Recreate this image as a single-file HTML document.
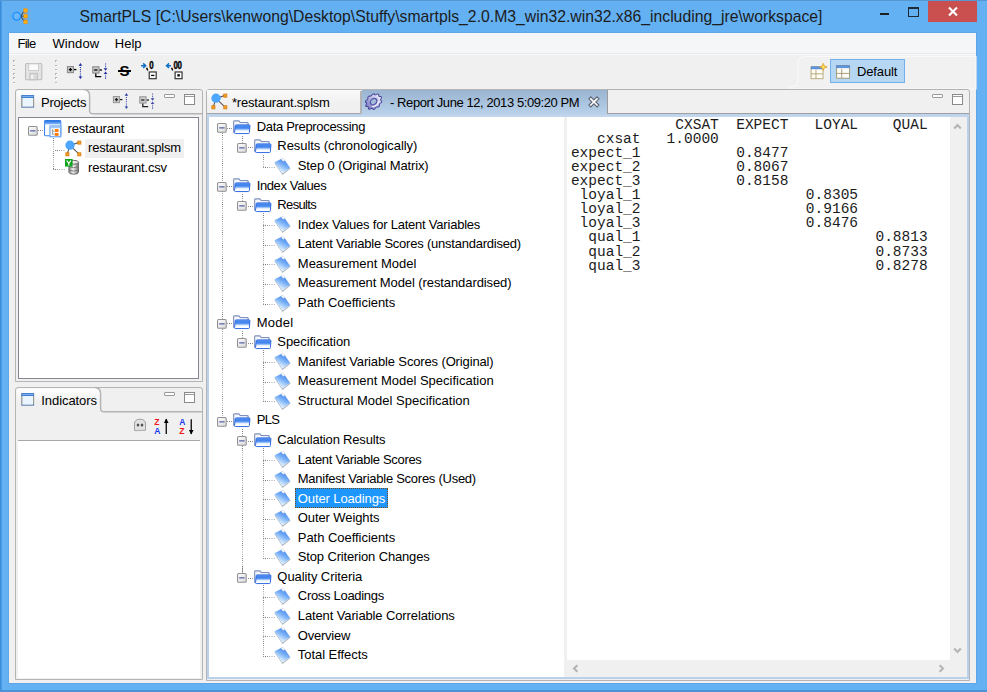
<!DOCTYPE html>
<html><head><meta charset="utf-8"><title>SmartPLS</title>
<style>
html,body{margin:0;padding:0}
body{width:987px;height:692px;overflow:hidden;background:#63B0F3;position:relative;font-family:"Liberation Sans",sans-serif;font-size:13px;color:#000;letter-spacing:-0.2px}
.a{position:absolute}
.t{position:absolute;white-space:pre;line-height:16px;height:16px}
svg{position:absolute;overflow:visible}
.dotv{position:absolute;width:1px;background-image:linear-gradient(to bottom,#727272 50%,transparent 50%);background-size:1px 2.17px}
.doth{position:absolute;height:1px;background-image:linear-gradient(to right,#727272 50%,transparent 50%);background-size:2.17px 1px}
pre{margin:0}
</style></head>
<body>
<svg width="0" height="0" style="left:0;top:0"><defs><linearGradient id="tg88" x1="0" y1="0" x2="0" y2="1"><stop offset="0" stop-color="#fff"/><stop offset=".55" stop-color="#f0f0f0"/></linearGradient><linearGradient id="eg" x1="0" y1="0" x2="1" y2="1"><stop offset="0" stop-color="#fff"/><stop offset="1" stop-color="#d8d8d8"/></linearGradient><linearGradient id="pg" x1="0" y1="0" x2="0" y2="1"><stop offset="0" stop-color="#1c6be0"/><stop offset="1" stop-color="#8ec0ff"/></linearGradient><linearGradient id="cg" x1="0" y1="0" x2="1" y2="0"><stop offset="0" stop-color="#8a8a8a"/><stop offset=".45" stop-color="#f2f2f2"/><stop offset="1" stop-color="#777"/></linearGradient><linearGradient id="tg386" x1="0" y1="0" x2="0" y2="1"><stop offset="0" stop-color="#fff"/><stop offset=".55" stop-color="#f0f0f0"/></linearGradient><linearGradient id="gg" x1="0" y1="0" x2="1" y2="0"><stop offset="0" stop-color="#7a7ac0"/><stop offset=".5" stop-color="#b8b8e2"/><stop offset="1" stop-color="#eeeefa"/></linearGradient><linearGradient id="fg" x1="0" y1="0" x2="0" y2="1"><stop offset="0" stop-color="#6ea8f7"/><stop offset=".25" stop-color="#3b7cea"/><stop offset=".48" stop-color="#65a1f6"/><stop offset=".6" stop-color="#dde9fc"/><stop offset=".82" stop-color="#ffffff"/></linearGradient><linearGradient id="lg" x1=".8" y1=".1" x2=".3" y2=".95"><stop offset="0" stop-color="#4284ea"/><stop offset=".4" stop-color="#76aef7"/><stop offset=".8" stop-color="#cfe7fd"/><stop offset="1" stop-color="#f2faff"/></linearGradient></defs></svg>
<div class="a" style="left:0px;top:0px;width:987px;height:692px;background:#63B0F3"></div>
<div class="a" style="left:0px;top:0px;width:3px;height:692px;background:linear-gradient(to right,#348ad8 0,#3f8fdb 1px,#63B0F3 2.4px)"></div>
<div class="a" style="left:0px;top:0px;width:987px;height:1px;background:#5696d3"></div>
<div class="a" style="left:0px;top:690px;width:987px;height:2px;background:#4d94d6"></div>
<div class="a" style="left:8px;top:32px;width:969px;height:652px;background:#5ea6e8"></div>
<svg style="left:12px;top:7.6px" width="17.4" height="17.4" viewBox="0 0 16 16">
<path d="M8 7.5 L11 3 M8 7.5 L11 7.5 M8 7.5 L11 12" stroke="#3a3a3a" stroke-width=".9" fill="none"/>
<path d="M12.4 3 V12.4" stroke="#9aa0a8" stroke-width="1.6"/>
<circle cx="4.3" cy="7.6" r="3.5" fill="#6db6f8" stroke="#1e90ff" stroke-width="1.2"/>
<rect x="10.9" y=".7" width="3.1" height="3.1" fill="#ffb400" stroke="#e89020" stroke-width=".7"/>
<rect x="10.9" y="6" width="3.1" height="3.1" fill="#ffb400" stroke="#e89020" stroke-width=".7"/>
<rect x="10.9" y="11.2" width="3.1" height="3.1" fill="#ffb400" stroke="#e89020" stroke-width=".7"/>
</svg>
<div class="t" style="left:51px;width:800px;text-align:center;top:7px;height:20px;line-height:20px;font-size:15.75px;letter-spacing:0;color:#1c1c1c">SmartPLS [C:\Users\kenwong\Desktop\Stuffy\smartpls_2.0.M3_win32.win32.x86_including_jre\workspace]</div>
<div class="a" style="left:880px;top:13px;width:8.9px;height:2.4px;background:#1e1e1e"></div>
<div class="a" style="left:908px;top:7px;width:11px;height:9.5px;box-sizing:border-box;border:1.2px solid #1e2a38;border-top-width:2.6px"></div>
<div class="a" style="left:928px;top:1px;width:49px;height:20.9px;background:#c9504f"></div>
<svg style="left:947.5px;top:7.3px" width="10" height="9" viewBox="0 0 10 9"><path d="M1 0.5 L9 8.5 M9 0.5 L1 8.5" stroke="#fff" stroke-width="2.1" fill="none"/></svg>
<div class="a" style="left:9px;top:33px;width:967px;height:650px;background:#f0f0f0"></div>
<div class="a" style="left:9px;top:33px;width:967px;height:20px;background:#f5f6f7"></div>
<div class="a" style="left:9px;top:53px;width:967px;height:1px;background:#e8e9ea"></div>
<div class="a" style="left:9px;top:54px;width:967px;height:1px;background:#fafafa"></div>
<div class="t" style="left:17.4px;top:35.75px;font-size:13px;letter-spacing:-0.70px;">File</div>
<div class="t" style="left:52.4px;top:35.75px;font-size:13px;letter-spacing:0.11px;">Window</div>
<div class="t" style="left:114.8px;top:35.75px;font-size:13px;letter-spacing:-0.02px;">Help</div>
<div class="a" style="left:13.2px;top:60.2px;width:1.6px;height:1.6px;background:#b4b4b4"></div>
<div class="a" style="left:14.2px;top:61.2px;width:1.2px;height:1.2px;background:#fff"></div>
<div class="a" style="left:13.2px;top:64.5px;width:1.6px;height:1.6px;background:#b4b4b4"></div>
<div class="a" style="left:14.2px;top:65.5px;width:1.2px;height:1.2px;background:#fff"></div>
<div class="a" style="left:13.2px;top:68.8px;width:1.6px;height:1.6px;background:#b4b4b4"></div>
<div class="a" style="left:14.2px;top:69.8px;width:1.2px;height:1.2px;background:#fff"></div>
<div class="a" style="left:13.2px;top:73.1px;width:1.6px;height:1.6px;background:#b4b4b4"></div>
<div class="a" style="left:14.2px;top:74.1px;width:1.2px;height:1.2px;background:#fff"></div>
<div class="a" style="left:13.2px;top:77.4px;width:1.6px;height:1.6px;background:#b4b4b4"></div>
<div class="a" style="left:14.2px;top:78.4px;width:1.2px;height:1.2px;background:#fff"></div>
<div class="a" style="left:13.2px;top:81.7px;width:1.6px;height:1.6px;background:#b4b4b4"></div>
<div class="a" style="left:14.2px;top:82.7px;width:1.2px;height:1.2px;background:#fff"></div>
<div class="a" style="left:55px;top:60.2px;width:1.6px;height:1.6px;background:#b4b4b4"></div>
<div class="a" style="left:56px;top:61.2px;width:1.2px;height:1.2px;background:#fff"></div>
<div class="a" style="left:55px;top:64.5px;width:1.6px;height:1.6px;background:#b4b4b4"></div>
<div class="a" style="left:56px;top:65.5px;width:1.2px;height:1.2px;background:#fff"></div>
<div class="a" style="left:55px;top:68.8px;width:1.6px;height:1.6px;background:#b4b4b4"></div>
<div class="a" style="left:56px;top:69.8px;width:1.2px;height:1.2px;background:#fff"></div>
<div class="a" style="left:55px;top:73.1px;width:1.6px;height:1.6px;background:#b4b4b4"></div>
<div class="a" style="left:56px;top:74.1px;width:1.2px;height:1.2px;background:#fff"></div>
<div class="a" style="left:55px;top:77.4px;width:1.6px;height:1.6px;background:#b4b4b4"></div>
<div class="a" style="left:56px;top:78.4px;width:1.2px;height:1.2px;background:#fff"></div>
<div class="a" style="left:55px;top:81.7px;width:1.6px;height:1.6px;background:#b4b4b4"></div>
<div class="a" style="left:56px;top:82.7px;width:1.2px;height:1.2px;background:#fff"></div>
<svg style="left:25.3px;top:63.2px;" width="17.35" height="17.35" viewBox="0 0 16 16"><rect x=".5" y=".5" width="15" height="15" rx="1" fill="#e4e4e4" stroke="#bcbcbc"/>
<rect x="3.5" y=".8" width="9" height="6.2" fill="#fafafa" stroke="#c8c8c8" stroke-width=".8"/>
<rect x="4.5" y="9.5" width="7" height="6" fill="#d8d8d8" stroke="#bdbdbd" stroke-width=".8"/>
<rect x="5.5" y="11" width="2.2" height="3.5" fill="#f4f4f4"/></svg>
<svg style="left:66.3px;top:62.2px;" width="17.35" height="17.35" viewBox="0 0 16 16"><g opacity="1"><rect x="1.3" y="4.2" width="5.6" height="5.6" fill="#c8c8c8" stroke="#8c8c8c"/>
<path d="M2.6 7 H5.6 M4.1 5.5 V8.5" stroke="#000" stroke-width="1.2"/><rect x="7.4" y="6.4" width="2.2" height="1.2" fill="#000"/>
<path d="M13.3 2.5 V14" stroke="#2030a0" stroke-width="1" stroke-dasharray="1 1"/>
<path d="M11.6 3.4 L13.3 1 L15 3.4 Z M11.6 13.3 L13.3 15.7 L15 13.3 Z" fill="#2030a0"/></g></svg>
<svg style="left:91.5px;top:62.2px;" width="17.35" height="17.35" viewBox="0 0 16 16"><g opacity="1" transform="translate(0 .9)"><rect x=".7" y="3.5" width="5.8" height="5.8" fill="#c8c8c8" stroke="#8c8c8c"/>
<rect x="2" y="5.9" width="3" height="1.2" fill="#000"/><rect x="7" y="5.9" width="2.2" height="1.2" fill="#000"/>
<path d="M3.5 9.8 V12.6 H8.5" stroke="#000" stroke-width="1.2" fill="none"/>
<path d="M12.5 .5 V5 M12.5 9.5 V14.6" stroke="#2030a0" stroke-width="1" stroke-dasharray="1 1"/>
<path d="M10.8 4.8 L12.5 7.2 L14.2 4.8 Z M10.8 10.2 L12.5 7.8 L14.2 10.2 Z" fill="#2030a0"/></g></svg>
<div class="t" style="left:119.6px;top:62.4px;font-size:15px;font-weight:bold;line-height:18px;height:18px;letter-spacing:0">S</div>
<div class="a" style="left:118px;top:70.2px;width:13px;height:1.4px;background:#000"></div>
<svg style="left:141px;top:61.6px;" width="17.35" height="17.35" viewBox="0 0 16 16"><path d="M0 3.4 H3.4 M2 1.3 L4.3 3.4 L2 5.5" stroke="#1070c8" stroke-width="1.4" fill="none"/><path d="M5.2 5.4 L6.2 7.8" stroke="#000" stroke-width="1.3"/><text transform="translate(7.6 6.9) scale(.78 1)" font-family="Liberation Sans,sans-serif" font-size="9.4" font-weight="bold" fill="#000" stroke="#000" stroke-width=".35">0</text><rect x="7.6" y="9.2" width="6.4" height="6.2" fill="#fff" stroke="#333" stroke-width="1.1"/><rect x="9.299999999999999" y="11.8" width="3" height="1.2" fill="#000"/></svg>
<svg style="left:166px;top:61.6px;" width="19.51875" height="17.35" viewBox="0 0 18 16"><path d="M1.2 3.4 H4.6 M2.8 1.3 L.5 3.4 L2.8 5.5" stroke="#1070c8" stroke-width="1.4" fill="none"/><path d="M5.2 5.4 L6.2 7.8" stroke="#000" stroke-width="1.3"/><text transform="translate(6.9 6.9) scale(.78 1)" font-family="Liberation Sans,sans-serif" font-size="9.4" font-weight="bold" fill="#000" stroke="#000" stroke-width=".35">0</text><text transform="translate(10.6 6.9) scale(.78 1)" font-family="Liberation Sans,sans-serif" font-size="9.4" font-weight="bold" fill="#000" stroke="#000" stroke-width=".35">0</text><rect x="8.4" y="9.2" width="6.4" height="6.2" fill="#fff" stroke="#333" stroke-width="1.1"/><rect x="10.5" y="11.2" width="2.2" height="2.2" fill="#000"/></svg>
<svg style="left:790px;top:53px" width="186" height="36" viewBox="0 0 186 36"><path d="M0 33.5 H3 Q8 33.5 8 27 V10 Q8 3.5 15 3.5 H186 V36 H0 Z" fill="#f1f1f1" stroke="#f9f9f9" stroke-width="1.2"/></svg>
<svg style="left:809.5px;top:62.5px;" width="17.35" height="17.35" viewBox="0 0 16 16"><rect x="1" y="3.5" width="11" height="11" fill="#fdfdf5" stroke="#b0a070" stroke-width=".8"/>
<rect x="1" y="3.5" width="11" height="2" fill="#5a94e0" stroke="#4a7cd0" stroke-width=".4"/>
<path d="M5.5 6 V14.5 M1 10 H12" stroke="#b0a070" stroke-width=".8"/>
<path d="M12.2 .3 L13.2 2.8 L15.8 3.6 L13.2 4.5 L12.2 7 L11.2 4.5 L8.8 3.6 L11.2 2.8 Z" fill="#ffe066" stroke="#d8a020" stroke-width=".7"/></svg>
<div class="a" style="left:830px;top:59px;width:74.8px;height:24px;box-sizing:border-box;background:#b6d7f4;border:1px solid #74b0ea"></div>
<svg style="left:835px;top:62.8px;" width="17.35" height="17.35" viewBox="0 0 16 16"><rect x="1.5" y="2.5" width="12" height="11.5" fill="#fdfdf8" stroke="#a09068" stroke-width=".8"/>
<rect x="1.5" y="2.5" width="12" height="2" fill="#5a94e0" stroke="#4a7cd0" stroke-width=".4"/>
<path d="M6.2 5.3 V14 M1.5 9.6 H13.5" stroke="#a09068" stroke-width=".8"/></svg>
<div class="t" style="left:857px;top:63.75px;font-size:13px;letter-spacing:-0.13px;">Default</div>
<div class="a" style="left:15px;top:88.7px;width:188px;height:293.5px;box-sizing:border-box;border:1.4px solid #b4b4b4;border-radius:3px 3px 0 0;background:#f0f0f0"></div>
<svg style="left:15px;top:88.7px" width="188" height="26.8" viewBox="0 0 188 26.8"><path d="M1.4 24.8 V4 Q1.4 1.4 4 1.4 H69.3 Q74.3 1.4 74.6 7 V24.8 Z" fill="url(#tg88)"/><path d="M69.3 .7 Q74.6 .7 74.6 7 V21.8 Q74.6 24.8 78.3 24.8 H187" fill="none" stroke="#b4b4b4" stroke-width="1.4"/></svg>
<svg style="left:21px;top:95px;" width="13.4" height="13" viewBox="0 0 13 13"><rect x=".6" y=".6" width="11.8" height="11.6" fill="#eaf5ff" stroke="#5a7aa8" stroke-width="1"/>
<rect x=".3" y=".2" width="12.4" height="2.8" fill="#3f7fd6"/><rect x="1" y="1.2" width="11" height=".8" fill="#8fb8ee"/>
<path d="M.6 3 V11" stroke="#c8b070" stroke-width=".6"/><path d="M12.4 3 V11" stroke="#c8b070" stroke-width=".6"/></svg>
<div class="t" style="left:41px;top:94.75px;font-size:13px;letter-spacing:-0.21px;">Projects</div>
<svg style="left:112.4px;top:92.3px;" width="17.35" height="17.35" viewBox="0 0 16 16"><g opacity="0.85"><rect x="1.3" y="4.2" width="5.6" height="5.6" fill="#c8c8c8" stroke="#8c8c8c"/>
<path d="M2.6 7 H5.6 M4.1 5.5 V8.5" stroke="#000" stroke-width="1.2"/><rect x="7.4" y="6.4" width="2.2" height="1.2" fill="#000"/>
<path d="M13.3 2.5 V14" stroke="#2030a0" stroke-width="1" stroke-dasharray="1 1"/>
<path d="M11.6 3.4 L13.3 1 L15 3.4 Z M11.6 13.3 L13.3 15.7 L15 13.3 Z" fill="#2030a0"/></g></svg>
<svg style="left:138.9px;top:92.0px;" width="17.35" height="17.35" viewBox="0 0 16 16"><g opacity="0.85" transform="translate(0 .9)"><rect x=".7" y="3.5" width="5.8" height="5.8" fill="#c8c8c8" stroke="#8c8c8c"/>
<rect x="2" y="5.9" width="3" height="1.2" fill="#000"/><rect x="7" y="5.9" width="2.2" height="1.2" fill="#000"/>
<path d="M3.5 9.8 V12.6 H8.5" stroke="#000" stroke-width="1.2" fill="none"/>
<path d="M12.5 .5 V5 M12.5 9.5 V14.6" stroke="#2030a0" stroke-width="1" stroke-dasharray="1 1"/>
<path d="M10.8 4.8 L12.5 7.2 L14.2 4.8 Z M10.8 10.2 L12.5 7.8 L14.2 10.2 Z" fill="#2030a0"/></g></svg>
<div class="a" style="left:164.2px;top:94px;width:11px;height:4px;box-sizing:border-box;border:1.2px solid #9a9a9a;background:#fff;border-radius:1px"></div>
<div class="a" style="left:184.0px;top:94px;width:11px;height:10.8px;box-sizing:border-box;border:1.2px solid #8a8a8a;background:linear-gradient(#fff 1.1px,#9c9c9c 1.1px,#9c9c9c 2.2px,#fff 2.2px)"></div>
<div class="a" style="left:18px;top:117px;width:181.3px;height:261.9px;box-sizing:border-box;border:1.4px solid #828790;background:#fff"></div>
<svg style="left:27.92px;top:125.52px" width="9.76" height="9.76" viewBox="0 0 9 9"><rect x=".5" y=".5" width="8" height="8" rx="1" fill="url(#eg)" stroke="#919191"/><rect x="2" y="4" width="5" height="1" fill="#40509c"/></svg>
<div class="doth" style="left:38px;top:130px;width:6.5px"></div>
<svg style="left:44.2px;top:120.1px;" width="17.35" height="17.35" viewBox="0 0 16 16"><rect x=".5" y=".5" width="15" height="14" rx="1" fill="#fff" stroke="#3d86e8" stroke-width="1"/>
<rect x=".5" y=".5" width="15" height="3.6" fill="url(#pg)"/>
<rect x="5.5" y="5.5" width="10" height="10" fill="#f4f8ff" stroke="#5c9cf0" stroke-width="1"/>
<rect x="5.5" y="5.5" width="10" height="2" fill="#9cc4f8"/>
<path d="M7.8 8.5 V13.2 H9.5 M7.8 10.2 H9.5" stroke="#888" stroke-width=".7" fill="none"/>
<rect x="10" y="8.4" width="3.4" height="2.6" fill="#ff7a00"/><rect x="10" y="12" width="3.4" height="2.6" fill="#ff7a00"/></svg>
<div class="t" style="left:67.6px;top:120.75px;font-size:13px;">restaurant</div>
<div class="dotv" style="left:53px;top:138px;height:31.5px"></div>
<div class="doth" style="left:55px;top:149.6px;width:10px"></div>
<div class="doth" style="left:53px;top:169.2px;width:12px"></div>
<svg style="left:65.2px;top:139.8px;" width="17.35" height="17.35" viewBox="0 0 16 16"><path d="M4.5 5 L13 2.2 M4.5 5 L13 13 M4.5 5 L2 13.2" stroke="#555" stroke-width="1" fill="none"/>
<circle cx="4.6" cy="4.8" r="4.25" fill="#4da6ff"/>
<rect x="11.8" y="1" width="2.8" height="2.8" fill="#f5a623" stroke="#d87a10" stroke-width=".8"/>
<rect x="11.8" y="11.8" width="2.8" height="2.8" fill="#f5a623" stroke="#d87a10" stroke-width=".8"/>
<rect x=".8" y="11.8" width="2.8" height="2.8" fill="#f5a623" stroke="#d87a10" stroke-width=".8"/></svg>
<div class="a" style="left:85.2px;top:138.8px;width:98.6px;height:19.3px;background:#f0f0f0"></div>
<div class="t" style="left:88px;top:139.75px;font-size:13px;">restaurant.splsm</div>
<svg style="left:64.6px;top:159.2px;" width="17.35" height="17.35" viewBox="0 0 16 16"><path d="M3.6 3 V12.2 A4.4 1.8 0 0 0 12.4 12.2 V3 Z" fill="url(#cg)" stroke="#5a5a5a" stroke-width=".8"/>
<ellipse cx="8" cy="3" rx="4.4" ry="1.8" fill="#e8e8e8" stroke="#5a5a5a" stroke-width=".8"/>
<path d="M3.6 6.2 A4.4 1.8 0 0 0 12.4 6.2 M3.6 9.3 A4.4 1.8 0 0 0 12.4 9.3" fill="none" stroke="#6a6a6a" stroke-width=".7"/>
<rect x="0" y="0" width="7" height="7" fill="#12a51e"/>
<path d="M1.6 1.4 L3.5 4 L5.4 1.4 M3.5 4 V6" stroke="#fff" stroke-width="1.1" fill="none"/></svg>
<div class="t" style="left:88px;top:159.75px;font-size:13px;">restaurant.csv</div>
<div class="a" style="left:15px;top:386.7px;width:188px;height:293.3px;box-sizing:border-box;border:1.4px solid #b4b4b4;border-radius:3px 3px 0 0;background:#f0f0f0"></div>
<svg style="left:15px;top:386.7px" width="188" height="26.8" viewBox="0 0 188 26.8"><path d="M1.4 24.8 V4 Q1.4 1.4 4 1.4 H80.3 Q85.3 1.4 85.6 7 V24.8 Z" fill="url(#tg386)"/><path d="M80.3 .7 Q85.6 .7 85.6 7 V21.8 Q85.6 24.8 89.3 24.8 H187" fill="none" stroke="#b4b4b4" stroke-width="1.4"/></svg>
<svg style="left:21.4px;top:392.8px;" width="13.4" height="13" viewBox="0 0 13 13"><rect x=".6" y=".6" width="11.8" height="11.6" fill="#eaf5ff" stroke="#5a7aa8" stroke-width="1"/>
<rect x=".3" y=".2" width="12.4" height="2.8" fill="#3f7fd6"/><rect x="1" y="1.2" width="11" height=".8" fill="#8fb8ee"/>
<path d="M.6 3 V11" stroke="#c8b070" stroke-width=".6"/><path d="M12.4 3 V11" stroke="#c8b070" stroke-width=".6"/></svg>
<div class="t" style="left:41.3px;top:392.75px;font-size:13px;letter-spacing:-0.07px;">Indicators</div>
<div class="a" style="left:164.2px;top:392px;width:11px;height:4px;box-sizing:border-box;border:1.2px solid #9a9a9a;background:#fff;border-radius:1px"></div>
<div class="a" style="left:184.0px;top:392px;width:11px;height:10.8px;box-sizing:border-box;border:1.2px solid #8a8a8a;background:linear-gradient(#fff 1.1px,#9c9c9c 1.1px,#9c9c9c 2.2px,#fff 2.2px)"></div>
<div class="a" style="left:17.8px;top:439.8px;width:181.8px;height:1.5px;background:#a8a8a8"></div>
<div class="a" style="left:17.8px;top:441.3px;width:181.8px;height:236.9px;background:#fff"></div>
<svg style="left:132.5px;top:417.5px" width="14" height="14" viewBox="0 0 14 14"><path d="M1.5 12.4 V6 Q1.5 1.2 7 1.2 Q12.5 1.2 12.5 6 V12.2 Q11 13 9.4 12 Q7.6 13.2 5.6 12.2 Q3.6 13.2 1.5 12.4 Z" fill="#e2e2e2" stroke="#a0a0a0" stroke-width="1"/><ellipse cx="5" cy="7" rx="1.3" ry="1.6" fill="#505050"/><ellipse cx="9" cy="7" rx="1.3" ry="1.6" fill="#505050"/></svg>
<svg style="left:154.3px;top:417.6px" width="16" height="17.5" viewBox="0 0 15 16.5"><text transform="translate(.2 6.9) scale(.86 1)" font-family="Liberation Sans,sans-serif" font-size="9.4" font-weight="bold" fill="#f01818">Z</text><text transform="translate(.2 14.9) scale(.86 1)" font-family="Liberation Sans,sans-serif" font-size="9.4" font-weight="bold" fill="#1838f0">A</text><path d="M11.5 1.2 V15" stroke="#000" stroke-width="1.2"/><path d="M9.3 4.6 L11.5 .4 L13.7 4.6 Z" fill="#000"/></svg>
<svg style="left:179.3px;top:417.6px" width="16" height="17.5" viewBox="0 0 15 16.5"><text transform="translate(.2 6.9) scale(.86 1)" font-family="Liberation Sans,sans-serif" font-size="9.4" font-weight="bold" fill="#1838f0">A</text><text transform="translate(.2 14.9) scale(.86 1)" font-family="Liberation Sans,sans-serif" font-size="9.4" font-weight="bold" fill="#f01818">Z</text><path d="M11.5 1.2 V15" stroke="#000" stroke-width="1.2"/><path d="M9.3 11.4 L11.5 15.6 L13.7 11.4 Z" fill="#000"/></svg>
<div class="a" style="left:206px;top:88.8px;width:764px;height:592.2px;box-sizing:border-box;border:1.4px solid #b4b4b4;border-radius:3px 3px 0 0;background:#f0f0f0"></div>
<div class="a" style="left:207.3px;top:113.4px;width:761.3px;height:566.0px;background:#b9d1ea"></div>
<div class="a" style="left:207.3px;top:113.4px;width:761.3px;height:3.6px;background:linear-gradient(#b9d1ea,#c4d8ee)"></div>
<div class="a" style="left:607px;top:113px;width:361.6px;height:1.3px;background:#a0a0a0"></div>
<div class="a" style="left:207.3px;top:90px;width:153.3px;height:23.4px;background:linear-gradient(#fafafa,#f0f0f0 60%)"></div>
<div class="a" style="left:207.3px;top:113.2px;width:154px;height:1.3px;background:#a4a4a4"></div>
<div class="a" style="left:360.4px;top:91px;width:1.3px;height:22.8px;background:#b4b4b4"></div>
<div class="a" style="left:361.6px;top:90px;width:245.6px;height:24.2px;background:linear-gradient(#99b4d1,#b9d1ea)"></div>
<div class="a" style="left:607px;top:90.4px;width:1.3px;height:23.6px;background:#9c9c9c"></div>
<svg style="left:211px;top:92.8px;" width="17.35" height="17.35" viewBox="0 0 16 16"><path d="M4.5 5 L13 2.2 M4.5 5 L13 13 M4.5 5 L2 13.2" stroke="#555" stroke-width="1" fill="none"/>
<circle cx="4.6" cy="4.8" r="4.25" fill="#4da6ff"/>
<rect x="11.8" y="1" width="2.8" height="2.8" fill="#f5a623" stroke="#d87a10" stroke-width=".8"/>
<rect x="11.8" y="11.8" width="2.8" height="2.8" fill="#f5a623" stroke="#d87a10" stroke-width=".8"/>
<rect x=".8" y="11.8" width="2.8" height="2.8" fill="#f5a623" stroke="#d87a10" stroke-width=".8"/></svg>
<div class="t" style="left:232px;top:94.75px;font-size:13px;">*restaurant.splsm</div>
<svg style="left:364.9px;top:92.7px;" width="17.35" height="17.35" viewBox="0 0 16 16"><g transform="rotate(-40 8 8) translate(0 1.5) scale(1 .8)">
<path d="M15.20 8.00 L16.23 9.04 L15.89 10.56 L14.51 11.07 L13.82 12.23 L14.05 13.68 L12.88 14.71 L11.47 14.31 L10.22 14.85 L9.56 16.15 L8.00 16.30 L7.10 15.14 L5.78 14.85 L4.47 15.51 L3.12 14.71 L3.07 13.25 L2.18 12.23 L0.73 12.00 L0.11 10.56 L0.93 9.35 L0.80 8.00 L-0.23 6.96 L0.11 5.44 L1.49 4.93 L2.18 3.77 L1.95 2.32 L3.12 1.29 L4.53 1.69 L5.78 1.15 L6.44 -0.15 L8.00 -0.30 L8.90 0.86 L10.22 1.15 L11.53 0.49 L12.88 1.29 L12.93 2.75 L13.82 3.77 L15.27 4.00 L15.89 5.44 L15.07 6.65 Z" fill="url(#gg)" stroke="#46469a" stroke-width="1" stroke-linejoin="round"/>
<circle cx="8" cy="8" r="3.3" fill="#a3bddb" stroke="#5656a8" stroke-width="1.3"/>
<path d="M4.2 9.8 A4.4 4.4 0 0 0 11.8 9.8" fill="none" stroke="#f4f4ff" stroke-width="1.2" transform="translate(0 1.4)"/></g></svg>
<div class="t" style="left:390px;top:94.75px;font-size:13px;letter-spacing:-0.42px;">- Report June 12, 2013 5:09:20 PM</div>
<svg style="left:588.4px;top:95.7px" width="11.8" height="11.8" viewBox="0 0 11 11"><path d="M.8 2.6 L2.6 .8 L5.5 3.7 L8.4 .8 L10.2 2.6 L7.3 5.5 L10.2 8.4 L8.4 10.2 L5.5 7.3 L2.6 10.2 L.8 8.4 L3.7 5.5 Z" fill="#fff" stroke="#5c6472" stroke-width="1"/></svg>
<div class="a" style="left:932.2px;top:94.2px;width:11px;height:4px;box-sizing:border-box;border:1.2px solid #9a9a9a;background:#fff;border-radius:1px"></div>
<div class="a" style="left:952.0px;top:94.2px;width:11px;height:10.8px;box-sizing:border-box;border:1.2px solid #8a8a8a;background:linear-gradient(#fff 1.1px,#9c9c9c 1.1px,#9c9c9c 2.2px,#fff 2.2px)"></div>
<div class="a" style="left:209.2px;top:117px;width:354.8px;height:560px;background:#fff"></div>
<div class="a" style="left:564px;top:117px;width:3px;height:560.2px;background:#f0f0f0"></div>
<div class="a" style="left:567px;top:117px;width:400.2px;height:560px;background:#fff"></div>
<div class="dotv" style="left:221.50px;top:133.00px;height:283.48px"></div>
<div class="doth" style="left:227.00px;top:127.50px;width:6.40px"></div>
<div class="dotv" style="left:242.15px;top:135.56px;height:7.00px"></div>
<div class="doth" style="left:247.65px;top:147.06px;width:6.60px"></div>
<div class="doth" style="left:263.30px;top:166.63px;width:12.00px"></div>
<div class="doth" style="left:227.00px;top:186.19px;width:6.40px"></div>
<div class="dotv" style="left:242.15px;top:194.26px;height:7.00px"></div>
<div class="doth" style="left:247.65px;top:205.76px;width:6.60px"></div>
<div class="doth" style="left:263.30px;top:225.32px;width:12.00px"></div>
<div class="doth" style="left:263.30px;top:244.89px;width:12.00px"></div>
<div class="doth" style="left:263.30px;top:264.46px;width:12.00px"></div>
<div class="doth" style="left:263.30px;top:284.02px;width:12.00px"></div>
<div class="doth" style="left:263.30px;top:303.59px;width:12.00px"></div>
<div class="doth" style="left:227.00px;top:323.15px;width:6.40px"></div>
<div class="dotv" style="left:242.15px;top:331.22px;height:7.00px"></div>
<div class="doth" style="left:247.65px;top:342.72px;width:6.60px"></div>
<div class="doth" style="left:263.30px;top:362.28px;width:12.00px"></div>
<div class="doth" style="left:263.30px;top:381.85px;width:12.00px"></div>
<div class="doth" style="left:263.30px;top:401.41px;width:12.00px"></div>
<div class="doth" style="left:227.00px;top:420.98px;width:6.40px"></div>
<div class="dotv" style="left:242.15px;top:429.04px;height:7.00px"></div>
<div class="doth" style="left:247.65px;top:440.54px;width:6.60px"></div>
<div class="doth" style="left:263.30px;top:460.11px;width:12.00px"></div>
<div class="doth" style="left:263.30px;top:479.67px;width:12.00px"></div>
<div class="doth" style="left:263.30px;top:499.24px;width:12.00px"></div>
<div class="doth" style="left:263.30px;top:518.80px;width:12.00px"></div>
<div class="doth" style="left:263.30px;top:538.37px;width:12.00px"></div>
<div class="doth" style="left:263.30px;top:557.93px;width:12.00px"></div>
<div class="dotv" style="left:242.15px;top:566.00px;height:7.00px"></div>
<div class="doth" style="left:247.65px;top:577.50px;width:6.60px"></div>
<div class="doth" style="left:263.30px;top:597.06px;width:12.00px"></div>
<div class="doth" style="left:263.30px;top:616.62px;width:12.00px"></div>
<div class="doth" style="left:263.30px;top:636.19px;width:12.00px"></div>
<div class="doth" style="left:263.30px;top:655.75px;width:12.00px"></div>
<div class="dotv" style="left:242.15px;top:446.04px;height:126.95px"></div>
<div class="dotv" style="left:262.80px;top:154.56px;height:12.56px"></div>
<div class="dotv" style="left:262.80px;top:213.26px;height:90.83px"></div>
<div class="dotv" style="left:262.80px;top:350.22px;height:51.69px"></div>
<div class="dotv" style="left:262.80px;top:448.04px;height:110.39px"></div>
<div class="dotv" style="left:262.80px;top:585.00px;height:71.26px"></div>
<svg style="left:217.12px;top:123.12px" width="9.76" height="9.76" viewBox="0 0 9 9"><rect x=".5" y=".5" width="8" height="8" rx="1" fill="url(#eg)" stroke="#919191"/><rect x="2" y="4" width="5" height="1" fill="#40509c"/></svg>
<svg style="left:233.3px;top:119.7px;" width="17.35" height="17.35" viewBox="0 0 16 16"><path d="M.6 11.2 V1.6 Q.6 .8 1.4 .8 H5.4 L6.8 2.4 H13.2 Q14 2.4 14 3.2 V11.2 Z" fill="#f4f6fb" stroke="#7f90bc" stroke-width="1"/>
<path d="M2.6 3.2 H12.6 V6 H2.6 Z" fill="#fff"/>
<path d="M2.2 12.5 Q1.4 12.5 1.4 11.7 L2 5.3 Q2.1 4.5 2.9 4.5 H14.8 Q15.7 4.5 15.6 5.4 L15.1 11.7 Q15 12.5 14.2 12.5 Z" fill="url(#fg)" stroke="#2c68e0" stroke-width=".9"/></svg>
<div class="t" style="left:256.7px;top:118.75px;font-size:13px;letter-spacing:-0.32px;">Data Preprocessing</div>
<svg style="left:237.32px;top:142.69px" width="9.76" height="9.76" viewBox="0 0 9 9"><rect x=".5" y=".5" width="8" height="8" rx="1" fill="url(#eg)" stroke="#919191"/><rect x="2" y="4" width="5" height="1" fill="#40509c"/></svg>
<svg style="left:253.95000000000002px;top:139.265px;" width="17.35" height="17.35" viewBox="0 0 16 16"><path d="M.6 11.2 V1.6 Q.6 .8 1.4 .8 H5.4 L6.8 2.4 H13.2 Q14 2.4 14 3.2 V11.2 Z" fill="#f4f6fb" stroke="#7f90bc" stroke-width="1"/>
<path d="M2.6 3.2 H12.6 V6 H2.6 Z" fill="#fff"/>
<path d="M2.2 12.5 Q1.4 12.5 1.4 11.7 L2 5.3 Q2.1 4.5 2.9 4.5 H14.8 Q15.7 4.5 15.6 5.4 L15.1 11.7 Q15 12.5 14.2 12.5 Z" fill="url(#fg)" stroke="#2c68e0" stroke-width=".9"/></svg>
<div class="t" style="left:277.34999999999997px;top:137.75px;font-size:13px;letter-spacing:-0.07px;">Results (chronologically)</div>
<svg style="left:274.2px;top:157.73px;" width="17.35" height="17.35" viewBox="0 0 16 16"><path d="M.9 4.6 L7.9 14.9 L15 9.4" fill="none" stroke="#aab2bc" stroke-width="1"/>
<path d="M.4 4 L7.4 .5 L9.6 1.6 L14.8 8.9 L7.5 14.4 Z" fill="url(#lg)"/>
<path d="M6.6 .9 L8.3 .1 L10 2.3 L8.4 3.1 Z" fill="#fff" stroke="#c4ccd8" stroke-width=".4"/></svg>
<div class="t" style="left:297.8px;top:157.75px;font-size:13px;letter-spacing:-0.12px;">Step 0 (Original Matrix)</div>
<svg style="left:217.12px;top:181.81px" width="9.76" height="9.76" viewBox="0 0 9 9"><rect x=".5" y=".5" width="8" height="8" rx="1" fill="url(#eg)" stroke="#919191"/><rect x="2" y="4" width="5" height="1" fill="#40509c"/></svg>
<svg style="left:233.3px;top:178.39499999999998px;" width="17.35" height="17.35" viewBox="0 0 16 16"><path d="M.6 11.2 V1.6 Q.6 .8 1.4 .8 H5.4 L6.8 2.4 H13.2 Q14 2.4 14 3.2 V11.2 Z" fill="#f4f6fb" stroke="#7f90bc" stroke-width="1"/>
<path d="M2.6 3.2 H12.6 V6 H2.6 Z" fill="#fff"/>
<path d="M2.2 12.5 Q1.4 12.5 1.4 11.7 L2 5.3 Q2.1 4.5 2.9 4.5 H14.8 Q15.7 4.5 15.6 5.4 L15.1 11.7 Q15 12.5 14.2 12.5 Z" fill="url(#fg)" stroke="#2c68e0" stroke-width=".9"/></svg>
<div class="t" style="left:256.7px;top:177.75px;font-size:13px;letter-spacing:-0.38px;">Index Values</div>
<svg style="left:237.32px;top:201.38px" width="9.76" height="9.76" viewBox="0 0 9 9"><rect x=".5" y=".5" width="8" height="8" rx="1" fill="url(#eg)" stroke="#919191"/><rect x="2" y="4" width="5" height="1" fill="#40509c"/></svg>
<svg style="left:253.95000000000002px;top:197.95999999999998px;" width="17.35" height="17.35" viewBox="0 0 16 16"><path d="M.6 11.2 V1.6 Q.6 .8 1.4 .8 H5.4 L6.8 2.4 H13.2 Q14 2.4 14 3.2 V11.2 Z" fill="#f4f6fb" stroke="#7f90bc" stroke-width="1"/>
<path d="M2.6 3.2 H12.6 V6 H2.6 Z" fill="#fff"/>
<path d="M2.2 12.5 Q1.4 12.5 1.4 11.7 L2 5.3 Q2.1 4.5 2.9 4.5 H14.8 Q15.7 4.5 15.6 5.4 L15.1 11.7 Q15 12.5 14.2 12.5 Z" fill="url(#fg)" stroke="#2c68e0" stroke-width=".9"/></svg>
<div class="t" style="left:277.34999999999997px;top:196.75px;font-size:13px;letter-spacing:-0.66px;">Results</div>
<svg style="left:274.2px;top:216.42499999999998px;" width="17.35" height="17.35" viewBox="0 0 16 16"><path d="M.9 4.6 L7.9 14.9 L15 9.4" fill="none" stroke="#aab2bc" stroke-width="1"/>
<path d="M.4 4 L7.4 .5 L9.6 1.6 L14.8 8.9 L7.5 14.4 Z" fill="url(#lg)"/>
<path d="M6.6 .9 L8.3 .1 L10 2.3 L8.4 3.1 Z" fill="#fff" stroke="#c4ccd8" stroke-width=".4"/></svg>
<div class="t" style="left:297.8px;top:216.75px;font-size:13px;letter-spacing:-0.22px;">Index Values for Latent Variables</div>
<svg style="left:274.2px;top:235.99px;" width="17.35" height="17.35" viewBox="0 0 16 16"><path d="M.9 4.6 L7.9 14.9 L15 9.4" fill="none" stroke="#aab2bc" stroke-width="1"/>
<path d="M.4 4 L7.4 .5 L9.6 1.6 L14.8 8.9 L7.5 14.4 Z" fill="url(#lg)"/>
<path d="M6.6 .9 L8.3 .1 L10 2.3 L8.4 3.1 Z" fill="#fff" stroke="#c4ccd8" stroke-width=".4"/></svg>
<div class="t" style="left:297.8px;top:235.75px;font-size:13px;letter-spacing:-0.22px;">Latent Variable Scores (unstandardised)</div>
<svg style="left:274.2px;top:255.55500000000004px;" width="17.35" height="17.35" viewBox="0 0 16 16"><path d="M.9 4.6 L7.9 14.9 L15 9.4" fill="none" stroke="#aab2bc" stroke-width="1"/>
<path d="M.4 4 L7.4 .5 L9.6 1.6 L14.8 8.9 L7.5 14.4 Z" fill="url(#lg)"/>
<path d="M6.6 .9 L8.3 .1 L10 2.3 L8.4 3.1 Z" fill="#fff" stroke="#c4ccd8" stroke-width=".4"/></svg>
<div class="t" style="left:297.8px;top:255.75px;font-size:13px;letter-spacing:0.00px;">Measurement Model</div>
<svg style="left:274.2px;top:275.12px;" width="17.35" height="17.35" viewBox="0 0 16 16"><path d="M.9 4.6 L7.9 14.9 L15 9.4" fill="none" stroke="#aab2bc" stroke-width="1"/>
<path d="M.4 4 L7.4 .5 L9.6 1.6 L14.8 8.9 L7.5 14.4 Z" fill="url(#lg)"/>
<path d="M6.6 .9 L8.3 .1 L10 2.3 L8.4 3.1 Z" fill="#fff" stroke="#c4ccd8" stroke-width=".4"/></svg>
<div class="t" style="left:297.8px;top:274.75px;font-size:13px;letter-spacing:-0.09px;">Measurement Model (restandardised)</div>
<svg style="left:274.2px;top:294.68500000000006px;" width="17.35" height="17.35" viewBox="0 0 16 16"><path d="M.9 4.6 L7.9 14.9 L15 9.4" fill="none" stroke="#aab2bc" stroke-width="1"/>
<path d="M.4 4 L7.4 .5 L9.6 1.6 L14.8 8.9 L7.5 14.4 Z" fill="url(#lg)"/>
<path d="M6.6 .9 L8.3 .1 L10 2.3 L8.4 3.1 Z" fill="#fff" stroke="#c4ccd8" stroke-width=".4"/></svg>
<div class="t" style="left:297.8px;top:294.75px;font-size:13px;letter-spacing:-0.04px;">Path Coefficients</div>
<svg style="left:217.12px;top:318.77px" width="9.76" height="9.76" viewBox="0 0 9 9"><rect x=".5" y=".5" width="8" height="8" rx="1" fill="url(#eg)" stroke="#919191"/><rect x="2" y="4" width="5" height="1" fill="#40509c"/></svg>
<svg style="left:233.3px;top:315.34999999999997px;" width="17.35" height="17.35" viewBox="0 0 16 16"><path d="M.6 11.2 V1.6 Q.6 .8 1.4 .8 H5.4 L6.8 2.4 H13.2 Q14 2.4 14 3.2 V11.2 Z" fill="#f4f6fb" stroke="#7f90bc" stroke-width="1"/>
<path d="M2.6 3.2 H12.6 V6 H2.6 Z" fill="#fff"/>
<path d="M2.2 12.5 Q1.4 12.5 1.4 11.7 L2 5.3 Q2.1 4.5 2.9 4.5 H14.8 Q15.7 4.5 15.6 5.4 L15.1 11.7 Q15 12.5 14.2 12.5 Z" fill="url(#fg)" stroke="#2c68e0" stroke-width=".9"/></svg>
<div class="t" style="left:256.7px;top:314.75px;font-size:13px;letter-spacing:0.27px;">Model</div>
<svg style="left:237.32px;top:338.34px" width="9.76" height="9.76" viewBox="0 0 9 9"><rect x=".5" y=".5" width="8" height="8" rx="1" fill="url(#eg)" stroke="#919191"/><rect x="2" y="4" width="5" height="1" fill="#40509c"/></svg>
<svg style="left:253.95000000000002px;top:334.915px;" width="17.35" height="17.35" viewBox="0 0 16 16"><path d="M.6 11.2 V1.6 Q.6 .8 1.4 .8 H5.4 L6.8 2.4 H13.2 Q14 2.4 14 3.2 V11.2 Z" fill="#f4f6fb" stroke="#7f90bc" stroke-width="1"/>
<path d="M2.6 3.2 H12.6 V6 H2.6 Z" fill="#fff"/>
<path d="M2.2 12.5 Q1.4 12.5 1.4 11.7 L2 5.3 Q2.1 4.5 2.9 4.5 H14.8 Q15.7 4.5 15.6 5.4 L15.1 11.7 Q15 12.5 14.2 12.5 Z" fill="url(#fg)" stroke="#2c68e0" stroke-width=".9"/></svg>
<div class="t" style="left:277.34999999999997px;top:333.75px;font-size:13px;letter-spacing:-0.06px;">Specification</div>
<svg style="left:274.2px;top:353.38000000000005px;" width="17.35" height="17.35" viewBox="0 0 16 16"><path d="M.9 4.6 L7.9 14.9 L15 9.4" fill="none" stroke="#aab2bc" stroke-width="1"/>
<path d="M.4 4 L7.4 .5 L9.6 1.6 L14.8 8.9 L7.5 14.4 Z" fill="url(#lg)"/>
<path d="M6.6 .9 L8.3 .1 L10 2.3 L8.4 3.1 Z" fill="#fff" stroke="#c4ccd8" stroke-width=".4"/></svg>
<div class="t" style="left:297.8px;top:353.75px;font-size:13px;letter-spacing:-0.14px;">Manifest Variable Scores (Original)</div>
<svg style="left:274.2px;top:372.94500000000005px;" width="17.35" height="17.35" viewBox="0 0 16 16"><path d="M.9 4.6 L7.9 14.9 L15 9.4" fill="none" stroke="#aab2bc" stroke-width="1"/>
<path d="M.4 4 L7.4 .5 L9.6 1.6 L14.8 8.9 L7.5 14.4 Z" fill="url(#lg)"/>
<path d="M6.6 .9 L8.3 .1 L10 2.3 L8.4 3.1 Z" fill="#fff" stroke="#c4ccd8" stroke-width=".4"/></svg>
<div class="t" style="left:297.8px;top:372.75px;font-size:13px;letter-spacing:-0.00px;">Measurement Model Specification</div>
<svg style="left:274.2px;top:392.51000000000005px;" width="17.35" height="17.35" viewBox="0 0 16 16"><path d="M.9 4.6 L7.9 14.9 L15 9.4" fill="none" stroke="#aab2bc" stroke-width="1"/>
<path d="M.4 4 L7.4 .5 L9.6 1.6 L14.8 8.9 L7.5 14.4 Z" fill="url(#lg)"/>
<path d="M6.6 .9 L8.3 .1 L10 2.3 L8.4 3.1 Z" fill="#fff" stroke="#c4ccd8" stroke-width=".4"/></svg>
<div class="t" style="left:297.8px;top:392.75px;font-size:13px;letter-spacing:0.00px;">Structural Model Specification</div>
<svg style="left:217.12px;top:416.60px" width="9.76" height="9.76" viewBox="0 0 9 9"><rect x=".5" y=".5" width="8" height="8" rx="1" fill="url(#eg)" stroke="#919191"/><rect x="2" y="4" width="5" height="1" fill="#40509c"/></svg>
<svg style="left:233.3px;top:413.175px;" width="17.35" height="17.35" viewBox="0 0 16 16"><path d="M.6 11.2 V1.6 Q.6 .8 1.4 .8 H5.4 L6.8 2.4 H13.2 Q14 2.4 14 3.2 V11.2 Z" fill="#f4f6fb" stroke="#7f90bc" stroke-width="1"/>
<path d="M2.6 3.2 H12.6 V6 H2.6 Z" fill="#fff"/>
<path d="M2.2 12.5 Q1.4 12.5 1.4 11.7 L2 5.3 Q2.1 4.5 2.9 4.5 H14.8 Q15.7 4.5 15.6 5.4 L15.1 11.7 Q15 12.5 14.2 12.5 Z" fill="url(#fg)" stroke="#2c68e0" stroke-width=".9"/></svg>
<div class="t" style="left:256.7px;top:411.75px;font-size:13px;letter-spacing:-0.70px;">PLS</div>
<svg style="left:237.32px;top:436.16px" width="9.76" height="9.76" viewBox="0 0 9 9"><rect x=".5" y=".5" width="8" height="8" rx="1" fill="url(#eg)" stroke="#919191"/><rect x="2" y="4" width="5" height="1" fill="#40509c"/></svg>
<svg style="left:253.95000000000002px;top:432.74px;" width="17.35" height="17.35" viewBox="0 0 16 16"><path d="M.6 11.2 V1.6 Q.6 .8 1.4 .8 H5.4 L6.8 2.4 H13.2 Q14 2.4 14 3.2 V11.2 Z" fill="#f4f6fb" stroke="#7f90bc" stroke-width="1"/>
<path d="M2.6 3.2 H12.6 V6 H2.6 Z" fill="#fff"/>
<path d="M2.2 12.5 Q1.4 12.5 1.4 11.7 L2 5.3 Q2.1 4.5 2.9 4.5 H14.8 Q15.7 4.5 15.6 5.4 L15.1 11.7 Q15 12.5 14.2 12.5 Z" fill="url(#fg)" stroke="#2c68e0" stroke-width=".9"/></svg>
<div class="t" style="left:277.34999999999997px;top:431.75px;font-size:13px;letter-spacing:-0.18px;">Calculation Results</div>
<svg style="left:274.2px;top:451.20500000000004px;" width="17.35" height="17.35" viewBox="0 0 16 16"><path d="M.9 4.6 L7.9 14.9 L15 9.4" fill="none" stroke="#aab2bc" stroke-width="1"/>
<path d="M.4 4 L7.4 .5 L9.6 1.6 L14.8 8.9 L7.5 14.4 Z" fill="url(#lg)"/>
<path d="M6.6 .9 L8.3 .1 L10 2.3 L8.4 3.1 Z" fill="#fff" stroke="#c4ccd8" stroke-width=".4"/></svg>
<div class="t" style="left:297.8px;top:451.75px;font-size:13px;letter-spacing:-0.31px;">Latent Variable Scores</div>
<svg style="left:274.2px;top:470.77000000000004px;" width="17.35" height="17.35" viewBox="0 0 16 16"><path d="M.9 4.6 L7.9 14.9 L15 9.4" fill="none" stroke="#aab2bc" stroke-width="1"/>
<path d="M.4 4 L7.4 .5 L9.6 1.6 L14.8 8.9 L7.5 14.4 Z" fill="url(#lg)"/>
<path d="M6.6 .9 L8.3 .1 L10 2.3 L8.4 3.1 Z" fill="#fff" stroke="#c4ccd8" stroke-width=".4"/></svg>
<div class="t" style="left:297.8px;top:470.75px;font-size:13px;letter-spacing:-0.26px;">Manifest Variable Scores (Used)</div>
<svg style="left:274.2px;top:490.33500000000004px;" width="17.35" height="17.35" viewBox="0 0 16 16"><path d="M.9 4.6 L7.9 14.9 L15 9.4" fill="none" stroke="#aab2bc" stroke-width="1"/>
<path d="M.4 4 L7.4 .5 L9.6 1.6 L14.8 8.9 L7.5 14.4 Z" fill="url(#lg)"/>
<path d="M6.6 .9 L8.3 .1 L10 2.3 L8.4 3.1 Z" fill="#fff" stroke="#c4ccd8" stroke-width=".4"/></svg>
<div class="a" style="left:295.2px;top:488.235px;width:92.8px;height:19.8px;box-sizing:border-box;background:#1e96ff;border:1px dotted #7a4a10"></div>
<div class="t" style="left:297.8px;top:490.75px;font-size:13px;letter-spacing:-0.11px;color:#fff">Outer Loadings</div>
<svg style="left:274.2px;top:509.9px;" width="17.35" height="17.35" viewBox="0 0 16 16"><path d="M.9 4.6 L7.9 14.9 L15 9.4" fill="none" stroke="#aab2bc" stroke-width="1"/>
<path d="M.4 4 L7.4 .5 L9.6 1.6 L14.8 8.9 L7.5 14.4 Z" fill="url(#lg)"/>
<path d="M6.6 .9 L8.3 .1 L10 2.3 L8.4 3.1 Z" fill="#fff" stroke="#c4ccd8" stroke-width=".4"/></svg>
<div class="t" style="left:297.8px;top:509.75px;font-size:13px;letter-spacing:-0.10px;">Outer Weights</div>
<svg style="left:274.2px;top:529.465px;" width="17.35" height="17.35" viewBox="0 0 16 16"><path d="M.9 4.6 L7.9 14.9 L15 9.4" fill="none" stroke="#aab2bc" stroke-width="1"/>
<path d="M.4 4 L7.4 .5 L9.6 1.6 L14.8 8.9 L7.5 14.4 Z" fill="url(#lg)"/>
<path d="M6.6 .9 L8.3 .1 L10 2.3 L8.4 3.1 Z" fill="#fff" stroke="#c4ccd8" stroke-width=".4"/></svg>
<div class="t" style="left:297.8px;top:529.75px;font-size:13px;letter-spacing:-0.04px;">Path Coefficients</div>
<svg style="left:274.2px;top:549.0300000000001px;" width="17.35" height="17.35" viewBox="0 0 16 16"><path d="M.9 4.6 L7.9 14.9 L15 9.4" fill="none" stroke="#aab2bc" stroke-width="1"/>
<path d="M.4 4 L7.4 .5 L9.6 1.6 L14.8 8.9 L7.5 14.4 Z" fill="url(#lg)"/>
<path d="M6.6 .9 L8.3 .1 L10 2.3 L8.4 3.1 Z" fill="#fff" stroke="#c4ccd8" stroke-width=".4"/></svg>
<div class="t" style="left:297.8px;top:548.75px;font-size:13px;letter-spacing:-0.15px;">Stop Criterion Changes</div>
<svg style="left:237.32px;top:573.12px" width="9.76" height="9.76" viewBox="0 0 9 9"><rect x=".5" y=".5" width="8" height="8" rx="1" fill="url(#eg)" stroke="#919191"/><rect x="2" y="4" width="5" height="1" fill="#40509c"/></svg>
<svg style="left:253.95000000000002px;top:569.695px;" width="17.35" height="17.35" viewBox="0 0 16 16"><path d="M.6 11.2 V1.6 Q.6 .8 1.4 .8 H5.4 L6.8 2.4 H13.2 Q14 2.4 14 3.2 V11.2 Z" fill="#f4f6fb" stroke="#7f90bc" stroke-width="1"/>
<path d="M2.6 3.2 H12.6 V6 H2.6 Z" fill="#fff"/>
<path d="M2.2 12.5 Q1.4 12.5 1.4 11.7 L2 5.3 Q2.1 4.5 2.9 4.5 H14.8 Q15.7 4.5 15.6 5.4 L15.1 11.7 Q15 12.5 14.2 12.5 Z" fill="url(#fg)" stroke="#2c68e0" stroke-width=".9"/></svg>
<div class="t" style="left:277.34999999999997px;top:568.75px;font-size:13px;letter-spacing:-0.07px;">Quality Criteria</div>
<svg style="left:274.2px;top:588.1600000000001px;" width="17.35" height="17.35" viewBox="0 0 16 16"><path d="M.9 4.6 L7.9 14.9 L15 9.4" fill="none" stroke="#aab2bc" stroke-width="1"/>
<path d="M.4 4 L7.4 .5 L9.6 1.6 L14.8 8.9 L7.5 14.4 Z" fill="url(#lg)"/>
<path d="M6.6 .9 L8.3 .1 L10 2.3 L8.4 3.1 Z" fill="#fff" stroke="#c4ccd8" stroke-width=".4"/></svg>
<div class="t" style="left:297.8px;top:587.75px;font-size:13px;letter-spacing:-0.30px;">Cross Loadings</div>
<svg style="left:274.2px;top:607.725px;" width="17.35" height="17.35" viewBox="0 0 16 16"><path d="M.9 4.6 L7.9 14.9 L15 9.4" fill="none" stroke="#aab2bc" stroke-width="1"/>
<path d="M.4 4 L7.4 .5 L9.6 1.6 L14.8 8.9 L7.5 14.4 Z" fill="url(#lg)"/>
<path d="M6.6 .9 L8.3 .1 L10 2.3 L8.4 3.1 Z" fill="#fff" stroke="#c4ccd8" stroke-width=".4"/></svg>
<div class="t" style="left:297.8px;top:607.75px;font-size:13px;letter-spacing:-0.12px;">Latent Variable Correlations</div>
<svg style="left:274.2px;top:627.2900000000001px;" width="17.35" height="17.35" viewBox="0 0 16 16"><path d="M.9 4.6 L7.9 14.9 L15 9.4" fill="none" stroke="#aab2bc" stroke-width="1"/>
<path d="M.4 4 L7.4 .5 L9.6 1.6 L14.8 8.9 L7.5 14.4 Z" fill="url(#lg)"/>
<path d="M6.6 .9 L8.3 .1 L10 2.3 L8.4 3.1 Z" fill="#fff" stroke="#c4ccd8" stroke-width=".4"/></svg>
<div class="t" style="left:297.8px;top:627.75px;font-size:13px;letter-spacing:-0.24px;">Overview</div>
<svg style="left:274.2px;top:646.855px;" width="17.35" height="17.35" viewBox="0 0 16 16"><path d="M.9 4.6 L7.9 14.9 L15 9.4" fill="none" stroke="#aab2bc" stroke-width="1"/>
<path d="M.4 4 L7.4 .5 L9.6 1.6 L14.8 8.9 L7.5 14.4 Z" fill="url(#lg)"/>
<path d="M6.6 .9 L8.3 .1 L10 2.3 L8.4 3.1 Z" fill="#fff" stroke="#c4ccd8" stroke-width=".4"/></svg>
<div class="t" style="left:297.8px;top:646.75px;font-size:13px;letter-spacing:-0.05px;">Total Effects</div>
<pre class="a" style="left:570.9px;top:117.69px;font-family:'Liberation Mono',monospace;font-size:14.5px;line-height:14.1px;letter-spacing:0;color:#1c1c1c">            CXSAT  EXPECT   LOYAL    QUAL
   cxsat   1.0000
expect_1           0.8477
expect_2           0.8067
expect_3           0.8158
 loyal_1                   0.8305
 loyal_2                   0.9166
 loyal_3                   0.8476
  qual_1                           0.8813
  qual_2                           0.8733
  qual_3                           0.8278</pre>
<div class="a" style="left:950px;top:117px;width:17.2px;height:543px;background:#f0f0f0"></div>
<div class="a" style="left:567px;top:660px;width:400.2px;height:17px;background:#f0f0f0"></div>
<svg style="left:953.30px;top:122.90px" width="9" height="7" viewBox="0 0 9 7"><path d="M1.2 5.4 L4.5 2 L7.8 5.4" fill="none" stroke="#b4b4b4" stroke-width="2.1"/></svg>
<svg style="left:953.30px;top:646.70px" width="9" height="7" viewBox="0 0 9 7"><path d="M1.2 1.6 L4.5 5 L7.8 1.6" fill="none" stroke="#b4b4b4" stroke-width="2.1"/></svg>
<svg style="left:572.10px;top:663.50px" width="7" height="9" viewBox="0 0 7 9"><path d="M5.4 1.2 L2 4.5 L5.4 7.8" fill="none" stroke="#b4b4b4" stroke-width="2.1"/></svg>
<svg style="left:938.10px;top:663.50px" width="7" height="9" viewBox="0 0 7 9"><path d="M1.6 1.2 L5 4.5 L1.6 7.8" fill="none" stroke="#b4b4b4" stroke-width="2.1"/></svg>
</body></html>
